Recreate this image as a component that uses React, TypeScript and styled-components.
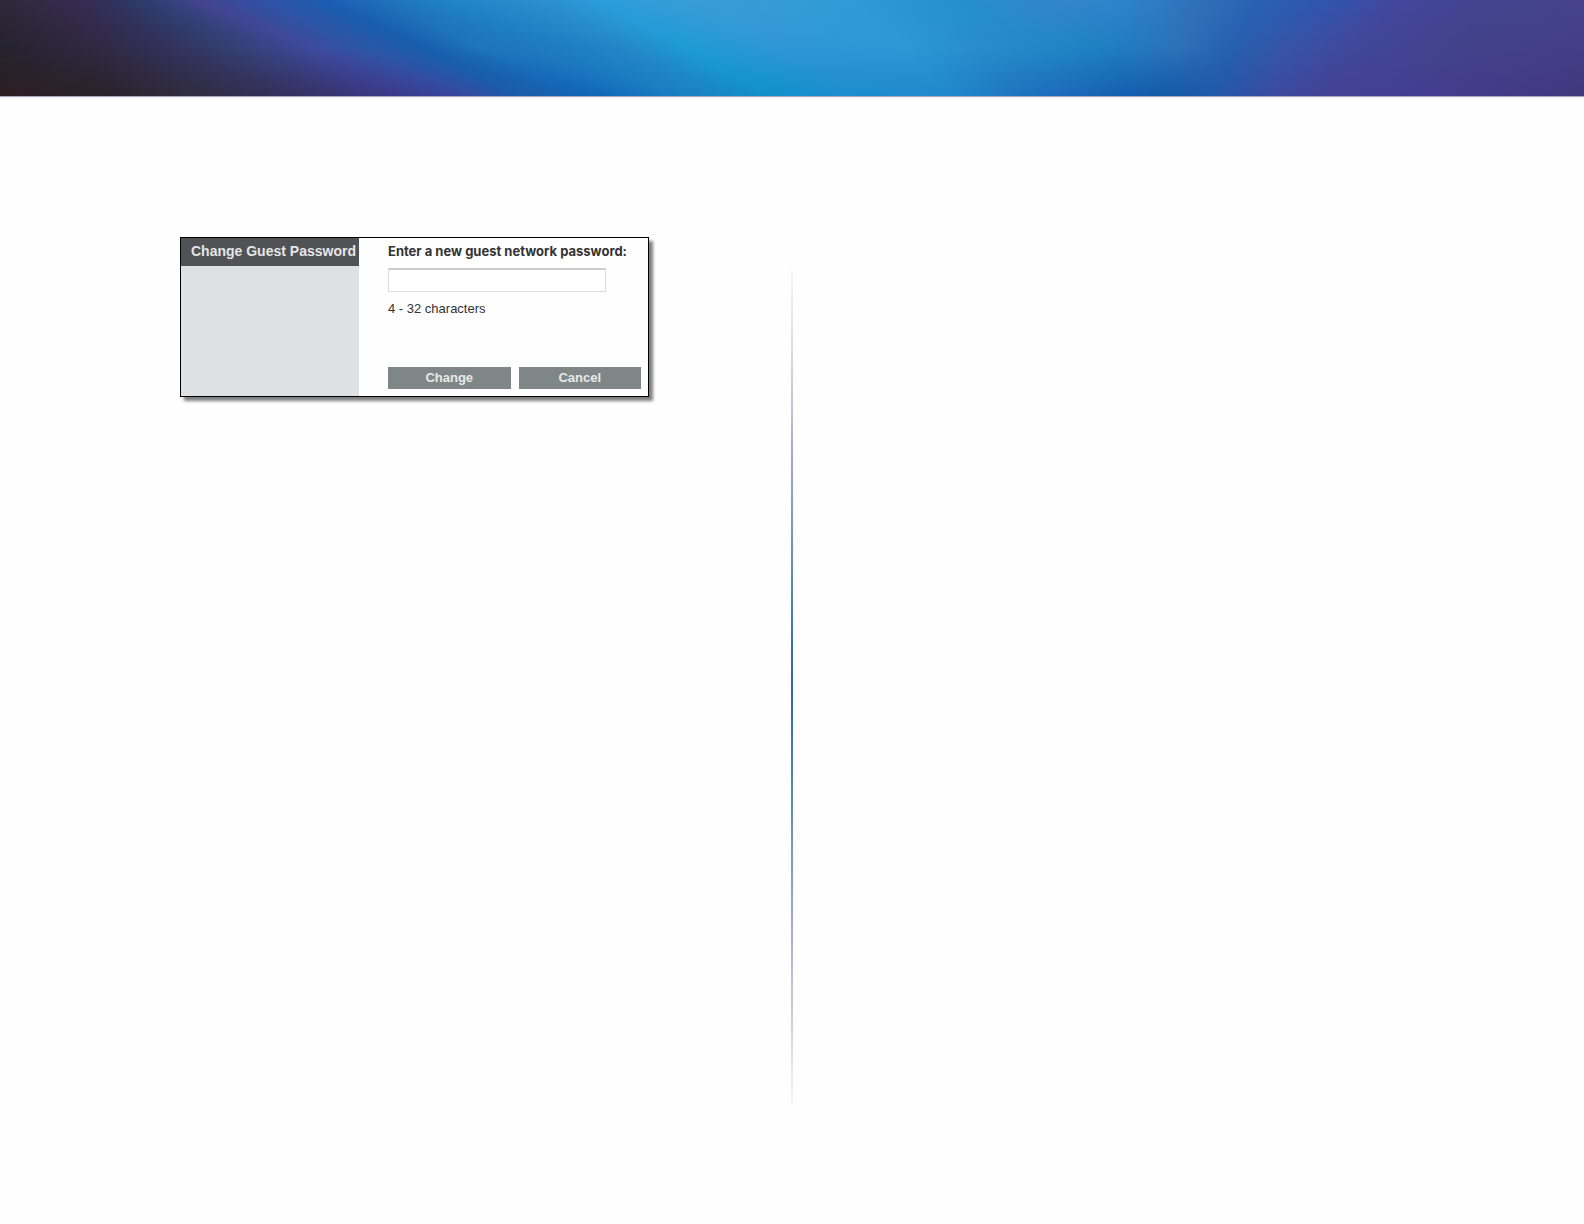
import React from "react";
import styled, { createGlobalStyle } from "styled-components";

const GlobalStyle = createGlobalStyle`
  *, *::before, *::after { box-sizing: border-box; }
  body { margin: 0; background: #fefefe; }
`;

const sans = `"Liberation Sans", Arial, Helvetica, sans-serif`;

/* The banner artwork: each ray lists its x and colour at the top, middle and
   bottom of the drawing; rows between them are blended. */
type Point = [x: number, color: number];
type Ray = [top: Point, middle: Point, bottom: Point];

const artWidth = 1584;
const artRows = 48;

const rays: Ray[] = [
  [[0, 0x2d2938], [0, 0x25232e], [0, 0x2c1e22]],
  [[70, 0x38294f], [90, 0x2f2840], [110, 0x2a222a]],
  [[120, 0x2e3560], [160, 0x322f58], [190, 0x302c40]],
  [[150, 0x2c3f70], [230, 0x333f70], [280, 0x352f5c]],
  [[195, 0x44428e], [312, 0x3d4a9d], [400, 0x3b3a8c]],
  [[260, 0x3050a4], [365, 0x2c57a5], [460, 0x35489e]],
  [[325, 0x1b5db0], [425, 0x175dad], [520, 0x1c5cab]],
  [[385, 0x1f70bb], [480, 0x1f74bd], [600, 0x1067b5]],
  [[440, 0x1f83c6], [560, 0x1e7cc2], [670, 0x1a7cc2]],
  [[530, 0x2c8ccb], [620, 0x2585c6], [700, 0x1a82c5]],
  [[600, 0x2b9dda], [685, 0x1e9bd3], [770, 0x1190cc]],
  [[700, 0x3a9dd5], [790, 0x2f96d6], [850, 0x1c8dcf]],
  [[850, 0x2f9ad6], [900, 0x2b98d5], [950, 0x2088cc]],
  [[960, 0x258fce], [1000, 0x268bc8], [1010, 0x1f75c0]],
  [[1060, 0x3585cb], [1060, 0x1f86c4], [1060, 0x1e6aba]],
  [[1120, 0x2e84ca], [1120, 0x1f7cc0], [1120, 0x1560b0]],
  [[1200, 0x3070b8], [1180, 0x2f70b8], [1165, 0x135aa8]],
  [[1260, 0x2a60b2], [1230, 0x2560ae], [1220, 0x2458a8]],
  [[1320, 0x2f55b0], [1290, 0x3853a5], [1270, 0x3a4aa0]],
  [[1400, 0x43469b], [1360, 0x41469a], [1320, 0x424296]],
  [[1500, 0x42438d], [1450, 0x42428b], [1420, 0x423e90]],
  [[1584, 0x454389], [1584, 0x423f86], [1584, 0x42377c]],
];

const mix = (a: number, b: number, t: number) => Math.round(a + (b - a) * t);

const blend = ([ax, ac]: Point, [bx, bc]: Point, t: number) => {
  const channel = (shift: number) => mix((ac >> shift) & 255, (bc >> shift) & 255, t);
  return { x: mix(ax, bx, t), color: `rgb(${channel(16)},${channel(8)},${channel(0)})` };
};

function BannerArt() {
  const rows = Array.from({ length: artRows }, (_, row) => {
    const y = (row / (artRows - 1)) * 2;
    return rays.map(([top, middle, bottom]) =>
      y <= 1 ? blend(top, middle, y) : blend(middle, bottom, y - 1)
    );
  });
  return (
    <svg
      width="100%"
      height="100%"
      viewBox={`0 0 ${artWidth} ${artRows}`}
      preserveAspectRatio="none"
      aria-hidden="true"
    >
      <defs>
        {rows.map((stops, row) => (
          <linearGradient id={`row-${row}`} key={row}>
            {stops.map(({ x, color }) => (
              <stop key={x} offset={x / artWidth} stopColor={color} />
            ))}
          </linearGradient>
        ))}
      </defs>
      {rows.map((_, row) => (
        <rect key={row} y={row} width={artWidth} height={1} fill={`url(#row-${row})`} />
      ))}
    </svg>
  );
}

const Page = styled.div`
  min-height: 100vh;
  font-family: ${sans};
`;

const Banner = styled.header`
  height: 96px;
  box-shadow: 0 1px 1px rgba(90, 80, 130, 0.5);

  svg {
    display: block;
  }
`;

const Columns = styled.main`
  display: grid;
  grid-template-columns: minmax(0, 1fr) 2px minmax(0, 1fr);
  padding-bottom: 120px;
`;

const Column = styled.section`
  padding: 141px 24px 0 180px;
`;

const Divider = styled.div`
  height: 834px;
  margin-top: 174px;
  background: linear-gradient(
    #f6f6f8, #dedde4 9%, #c3bfd8 17%, #aaa6cd 22%, #7f9ec4 29%, #6390bd 35%,
    #346ea6 46%, #2d6a9f 51%, #4279ac 57%, #6795bd 67%, #7ba1c5 72%,
    #a3a8cf 78%, #b9bdd8 84%, #cfcfd8 90%, #f6f6f8
  );
`;

const Panel = styled.form`
  display: grid;
  grid-template-columns: 178px minmax(0, 1fr);
  max-width: 469px;
  min-height: 160px;
  border: 1px solid #000;
  background: #fefefe;
  box-shadow: 4px 4px 3px rgba(0, 0, 0, 0.5);
`;

const Side = styled.div`
  background: #dde1e1;
`;

const Title = styled.h1`
  margin: 0;
  padding: 0 0 2px 10px;
  background: #515255;
  color: #e4e6e8;
  font: bold 14px/26px ${sans};
  white-space: nowrap;
`;

const Fields = styled.div`
  display: flex;
  flex-direction: column;
  align-items: flex-start;
  padding: 4px 7px 7px 29px;
`;

const Label = styled.label`
  color: #333;
  font: bold 13px/18px Inter, ${sans};
  white-space: nowrap;
`;

const PasswordInput = styled.input`
  width: 218px;
  height: 24px;
  margin-top: 8px;
  padding: 0 6px;
  border: 1px solid #ddd;
  border-top: 2px solid #ccc;
  background: #fff;
  font: 13px/20px ${sans};
`;

const Hint = styled.p`
  margin: 8px 0 0;
  color: #333;
  font: 13px/18px ${sans};
`;

const Actions = styled.div`
  display: grid;
  grid-template-columns: 1fr 1fr;
  gap: 8px;
  width: 100%;
  margin-top: auto;
`;

const Button = styled.button`
  height: 22px;
  padding: 0;
  border: 0;
  background: #7f8786;
  color: #e8eaea;
  font: bold 13px/22px ${sans};
  cursor: pointer;
`;

export default function App() {
  return (
    <Page>
      <GlobalStyle />
      <Banner>
        <BannerArt />
      </Banner>
      <Columns>
        <Column>
          <Panel onSubmit={(event) => event.preventDefault()}>
            <Side>
              <Title>Change Guest Password</Title>
            </Side>
            <Fields>
              <Label htmlFor="guest-password">Enter a new guest network password:</Label>
              <PasswordInput
                id="guest-password"
                type="text"
                minLength={4}
                maxLength={32}
                aria-describedby="guest-password-hint"
              />
              <Hint id="guest-password-hint">4 - 32 characters</Hint>
              <Actions>
                <Button type="submit">Change</Button>
                <Button type="button">Cancel</Button>
              </Actions>
            </Fields>
          </Panel>
        </Column>
        <Divider />
      </Columns>
    </Page>
  );
}
